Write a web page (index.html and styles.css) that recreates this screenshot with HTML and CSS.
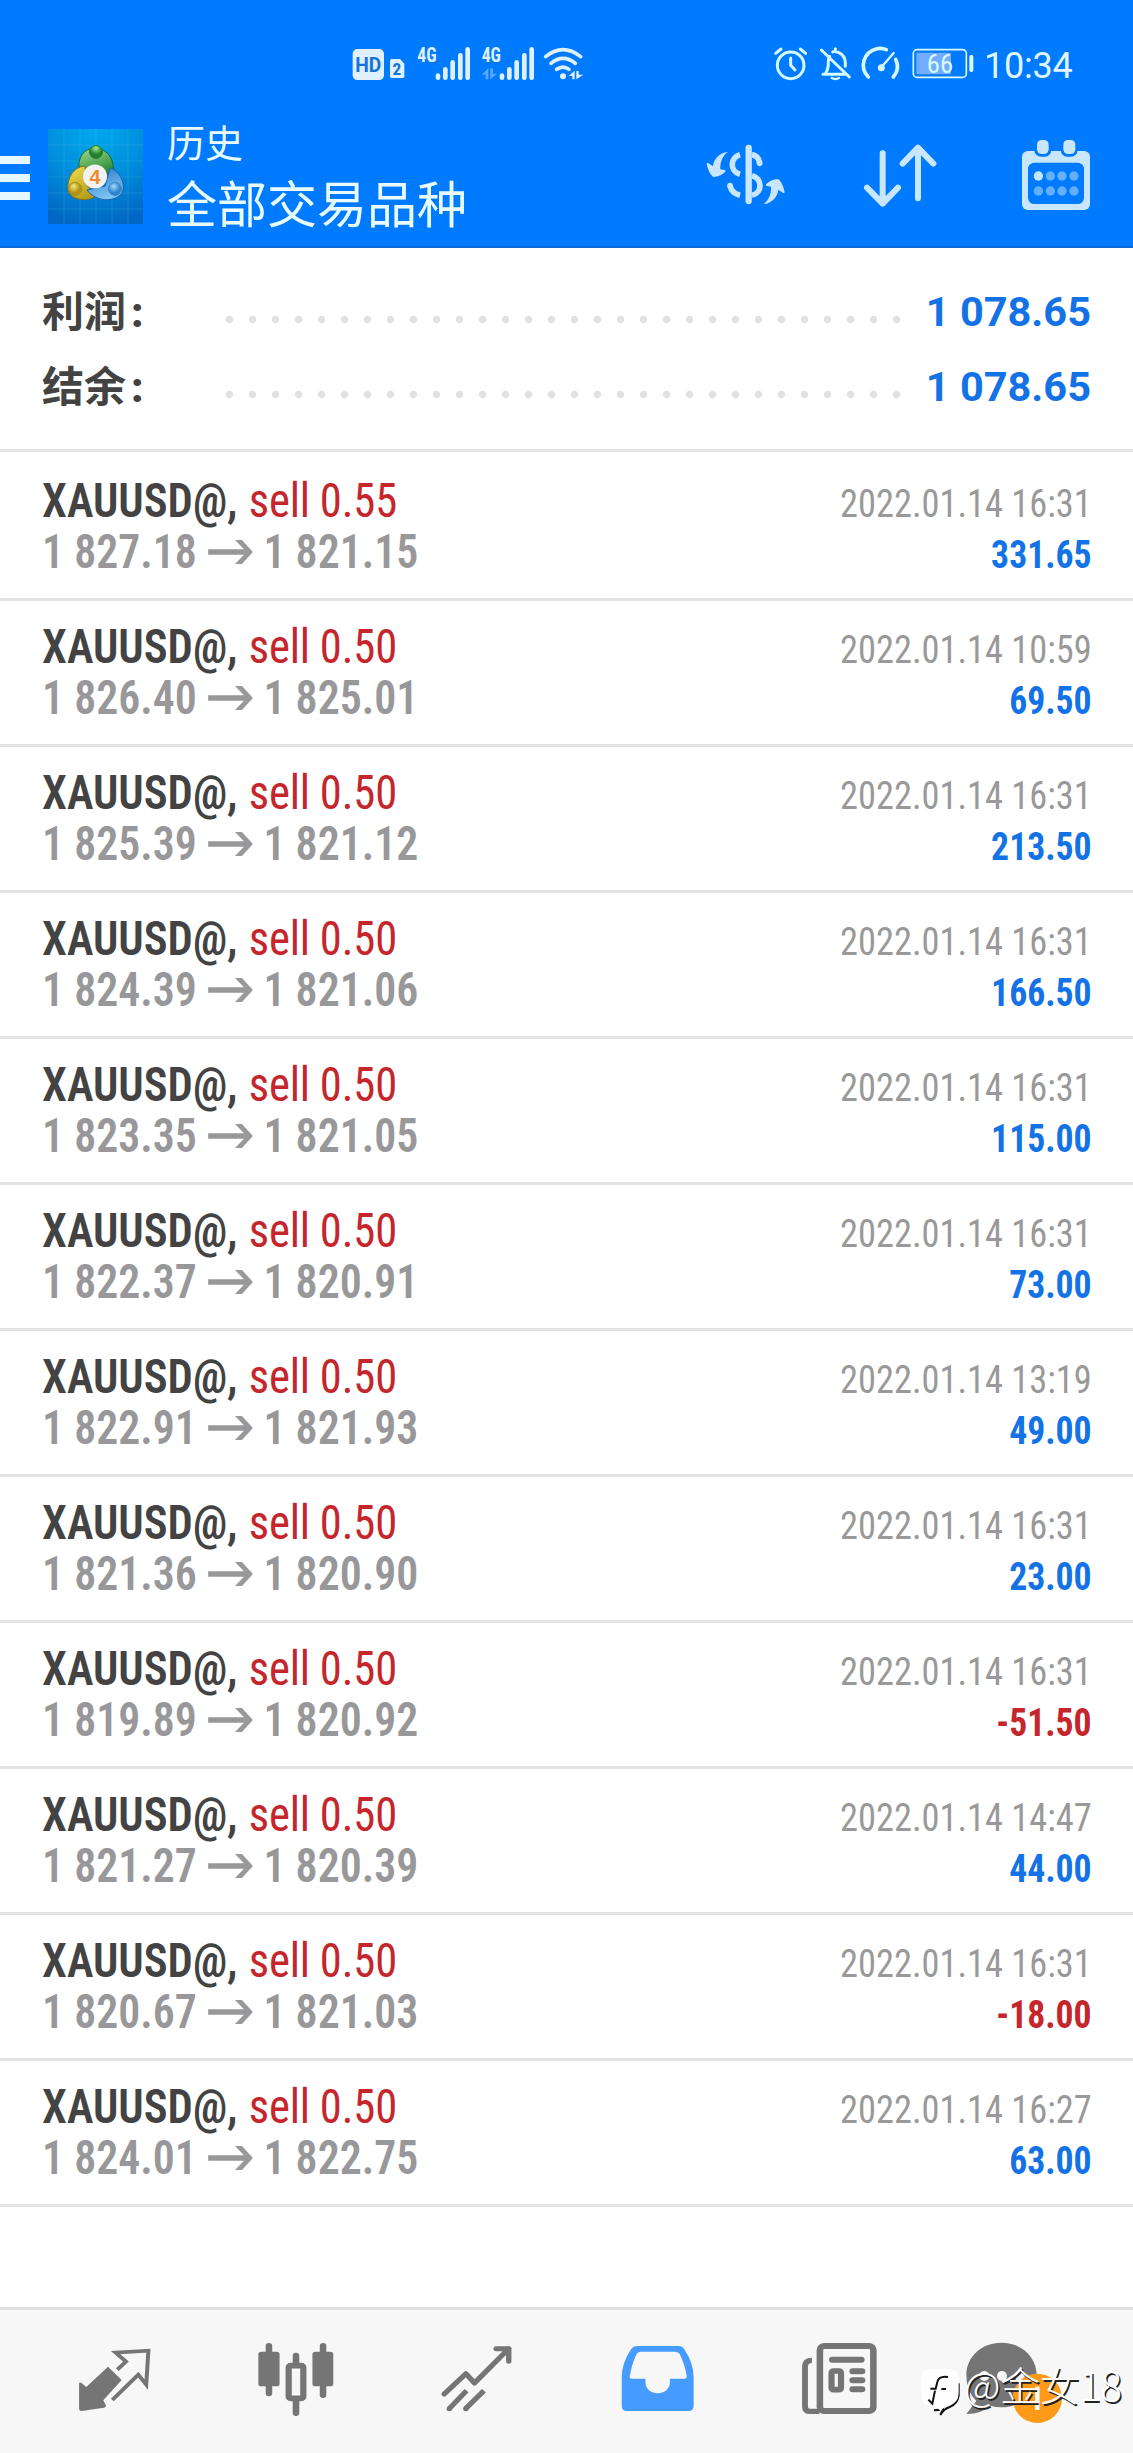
FILE: index.html
```html
<!DOCTYPE html>
<html lang="zh-CN">
<head>
<meta charset="utf-8">
<title>历史</title>
<link rel="stylesheet" href="styles.css">
</head>
<body>
<header class="header">
  <div class="status">
    <svg class="status-left" viewBox="36 45 696 110">
      <rect x="38" y="57" width="94" height="93" rx="14" fill="#dff1ff"/>
      <text x="85" y="125" class="hd" text-anchor="middle" textLength="78" lengthAdjust="spacingAndGlyphs">HD</text>
      <path d="M150 92q0-5 5-5h25l13 14v38q0 5-5 5h-33q-5 0-5-5z" fill="#dff1ff"/>
      <text x="171" y="136" class="sim" text-anchor="middle">2</text>
      <text x="232" y="95" class="net" textLength="58" lengthAdjust="spacingAndGlyphs">4G</text>
      <text x="425" y="95" class="net" textLength="58" lengthAdjust="spacingAndGlyphs">4G</text>
      <g stroke="#dff1ff" stroke-width="14" stroke-linecap="round">
        <path d="M294 137v6M316 118v25M338 97v46M361 76v67M383 58v85"/>
        <path d="M486 137v6M508 118v25M530 97v46M553 76v67M575 58v85"/>
      </g>
      <path d="M425 134l20-19v33h-8v-14zM451 148v-33h8v16h12z" fill="#58a9ff"/>
      <g fill="none" stroke="#dff1ff" stroke-width="11" stroke-linecap="round">
        <path d="M617 80Q669 38 722 80"/><path d="M633 100Q669 70 706 100"/><path d="M650 118Q669 104 687 118"/>
      </g>
      <circle cx="669" cy="139" r="9" fill="#dff1ff"/>
      <path d="M686 138l18-16v26h-7v-10zM709 148v-25h7v11h14z" fill="#dff1ff"/>
    </svg>
    <svg class="status-right" viewBox="36 45 606 110">
      <g fill="none" stroke="#d5fbff" stroke-width="9" stroke-linecap="round" stroke-linejoin="round">
        <circle cx="92" cy="106" r="40"/><path d="M92 84v22l13 14M47 70l16-13M121 57l16 13"/>
        <path d="M184 60l84 81M189 133h65M197 130q9-14 8-37 0-8 4-14M218 66q5-3 17 1 21 9 21 32v10M226 56v4"/>
        <path d="M215 144q11 6 22 0" stroke-width="7"/>
        <path d="M325 141q-21-20-13-50 9-28 39-35 15-3 28 3M407 88q14 28-7 53" stroke-width="11"/>
        <path d="M401 69l-37 43" stroke-width="7"/>
        <circle cx="364" cy="113" r="6"/>
        <rect x="460" y="59" width="159" height="83" rx="11" stroke-width="5"/>
      </g>
      <rect x="469" y="68" width="104" height="65" rx="4" fill="#72adff"/>
      <rect x="628" y="75" width="12" height="51" rx="5" fill="#d5fbff"/>
      <text x="540" y="128" class="charge" text-anchor="middle">66</text>
    </svg>
    <span class="clock">10:34</span>
  </div>
  <div class="toolbar">
    <div class="menu"><i></i><i></i><i></i></div>
    <svg class="logo" viewBox="0 0 95 95">
      <defs>
        <radialGradient id="sky" cx=".5" cy="0" r="1"><stop offset="0" stop-color="#00a8f0"/><stop offset=".5" stop-color="#0090dc"/><stop offset="1" stop-color="#0068c4"/></radialGradient>
        <linearGradient id="gr" x2=".4" y2="1"><stop stop-color="#a5dc90"/><stop offset="1" stop-color="#258a35"/></linearGradient>
        <linearGradient id="ye" x2=".4" y2="1"><stop stop-color="#f0dd50"/><stop offset="1" stop-color="#b8a018"/></linearGradient>
        <linearGradient id="bl" x2=".4" y2="1"><stop stop-color="#2878c0"/><stop offset="1" stop-color="#7cc4f4"/></linearGradient>
        <radialGradient id="gb" cx=".5" cy=".2"><stop stop-color="#a8e890"/><stop offset="1" stop-color="#228030"/></radialGradient>
        <radialGradient id="yb" cx=".4" cy=".3"><stop stop-color="#f4e480"/><stop offset="1" stop-color="#b09010"/></radialGradient>
        <radialGradient id="bb" cx=".4" cy=".3"><stop stop-color="#a0d8fc"/><stop offset="1" stop-color="#2f80cc"/></radialGradient>
      </defs>
      <rect width="95" height="95" fill="url(#sky)"/>
      <path d="M16 0v95M32 0v95M48 0v95M64 0v95M80 0v95M0 16h95M0 32h95M0 48h95M0 64h95M0 80h95" stroke="#58c0f0" stroke-width=".7" opacity=".35"/>
      <g stroke-width="1">
        <path d="M34 48C28 38 30 20 47 19 63 20 69 37 63 48L55 40H40z" fill="url(#gr)" stroke="#176c2a"/>
        <path d="M37 37C25 38 19 49 20 61 23 72 40 73 48 67L38 55z" fill="url(#ye)" stroke="#80701a"/>
        <path d="M62 39C72 42 78 55 74 64 66 74 48 73 39 61L57 57z" fill="url(#bl)" stroke="#1c5fa8"/>
        <circle cx="48" cy="23" r="6.5" fill="url(#gb)" stroke="#247a34"/>
        <circle cx="27" cy="60" r="6.5" fill="url(#yb)" stroke="#a09020"/>
        <circle cx="67" cy="60" r="6.5" fill="url(#bb)" stroke="#3c88cc"/>
      </g>
      <circle cx="47" cy="47.500" r="12" fill="#f4f2f0"/>
      <text x="47" y="54.500" class="four" text-anchor="middle">4</text>
    </svg>
    <div class="titles">
      <div class="title">历史</div>
      <div class="subtitle">全部交易品种</div>
    </div>
    <svg class="currency" viewBox="78 72 240 186">
      <path d="M206 84v159" stroke="#c9e6ff" stroke-width="19" stroke-linecap="round"/>
      <path d="M180 104C150 112 148 154 180 163M216 104Q235 107 239 129M216 167C248 175 248 219 216 226M180 226Q155 220 150 197" fill="none" stroke="#c9e6ff" stroke-width="17"/>
      <circle cx="239" cy="130" r="8.500" fill="#c9e6ff"/><circle cx="150" cy="197" r="8.500" fill="#c9e6ff"/>
      <path id="swoosh" d="M143 96C118 97 100 120 99 139L83 128Q78 130 81 136 87 160 97 169 101 172 106 170 122 168 136 155 138 151 134 150L121 148C120 125 128 108 143 96z" fill="#c9e6ff"/>
      <use href="#swoosh" transform="rotate(180 197 174)"/>
    </svg>
    <svg class="sort" viewBox="550 70 222 195">
      <path d="M609 101v150M562 204l47 48 46-48M715 236V84M669 132l46-48 46 48" fill="none" stroke="#c9e6ff" stroke-width="18" stroke-linecap="round" stroke-linejoin="round"/>
    </svg>
    <svg class="calendar" viewBox="1023 57 210 216">
      <rect x="1026" y="93" width="204" height="177" rx="17" fill="#c9e6ff"/>
      <rect x="1044" y="128" width="168" height="124" rx="19" fill="#007aff"/>
      <rect x="1063" y="52" width="51" height="58" rx="20" fill="#007aff"/><rect x="1142" y="52" width="51" height="58" rx="20" fill="#007aff"/>
      <rect x="1071" y="60" width="35" height="42" rx="14" fill="#c9e6ff"/><rect x="1150" y="60" width="36" height="42" rx="14" fill="#c9e6ff"/>
      <circle cx="1075" cy="168" r="14" fill="#c9e6ff"/>
      <g fill="#64afff"><circle cx="1111" cy="168" r="14"/><circle cx="1146" cy="168" r="14"/><circle cx="1182" cy="168" r="14"/><circle cx="1075" cy="213" r="14"/><circle cx="1111" cy="213" r="14"/><circle cx="1146" cy="213" r="14"/><circle cx="1182" cy="213" r="14"/></g>
    </svg>
  </div>
</header>

<section class="summary">
  <div class="sum-row"><span class="sum-label">利润<b>:</b></span><span class="dots"></span><span class="sum-value">1 078.65</span></div>
  <div class="sum-row"><span class="sum-label">结余<b>:</b></span><span class="dots"></span><span class="sum-value">1 078.65</span></div>
</section>

<main class="list" id="list"></main>

<nav class="nav">
  <div class="tab"><svg width="74" height="82" viewBox="215 156 205 246" preserveAspectRatio="none">
    <path d="M298 230l38 40-51 61 8 17q-1 4-6 5l-62 10q-7 0-7-6v-77q1-4 6-2l14 13z" fill="#757575"/>
    <path d="M324 239l24-24-29-27 91-6-6 102-22-30-72 76" fill="none" stroke="#757575" stroke-width="11"/>
  </svg></div>
  <div class="tab"><svg width="76" height="82" viewBox="712 156 208 246" preserveAspectRatio="none">
    <path d="M742 168v142M890 168v147M816 197v25M816 330v39" stroke="#757575" stroke-width="18" stroke-linecap="round"/>
    <rect x="713" y="185" width="58" height="104" rx="8" fill="#757575"/><rect x="861" y="185" width="57" height="104" rx="8" fill="#757575"/>
    <rect x="796" y="227" width="40" height="98" rx="5" fill="#f7f7f7" stroke="#757575" stroke-width="17"/>
  </svg></div>
  <div class="tab"><svg width="71" height="82" viewBox="1218 156 197 246" preserveAspectRatio="none">
    <path d="M1227 312l60-61 24 28 95-103M1371 176h35v38" fill="none" stroke="#757575" stroke-width="15" stroke-linecap="round" stroke-linejoin="round"/>
    <path d="M1289 302l-48 54M1337 302l-51 54" stroke="#757575" stroke-width="15"/><circle cx="1241" cy="356" r="7.500" fill="#757575"/><circle cx="1287" cy="356" r="7.500" fill="#757575"/>
  </svg></div>
  <div class="tab"><svg width="73" height="82" viewBox="150 156 200 246" preserveAspectRatio="none">
    <path d="M194 168h114q10 0 15 9 26 42 26 85v86q0 15-14 15H166q-14 0-14-15v-86q0-43 26-85 6-9 16-9z" fill="#459cfe"/>
    <path d="M204 185h93q10 0 14 8 14 31 19 65 1 8-7 8h-39v10c0 45-67 45-67 0v-10h-36q-9 0-7-8 5-34 18-65 4-8 12-8z" fill="#f7f7f7"/>
  </svg></div>
  <div class="tab"><svg width="76" height="82" viewBox="650 156 209 246" preserveAspectRatio="none">
    <path d="M680 211q-19 0-19 19v120q0 14 14 14h26" fill="none" stroke="#757575" stroke-width="16"/>
    <rect x="702" y="168" width="147" height="195" rx="12" fill="none" stroke="#757575" stroke-width="18"/>
    <path d="M736 209h80M792 244h26M792 271h26M792 298h26" stroke="#757575" stroke-width="18" stroke-linecap="round"/>
    <rect x="734" y="243" width="26" height="56" rx="5" fill="none" stroke="#757575" stroke-width="17"/>
  </svg></div>
  <div class="tab chat"><svg width="98" height="82" viewBox="153 36 294 246">
    <path d="M259 38c60 0 106 43 106 97s-46 97-106 97q-18 0-33-5-25 24-72 25l30-39q-30-28-30-78c0-54 45-97 105-97z" fill="#757575"/>
    <g fill="#f7f7f7"><circle cx="208" cy="138" r="15"/><circle cx="261" cy="138" r="15"/><circle cx="314" cy="138" r="15"/></g>
    <circle cx="367" cy="205" r="74" fill="#ff9a19"/><path d="M367 170v70" stroke="#fff" stroke-width="13"/>
  </svg></div>
  <div class="mark">
    <svg width="44" height="52" viewBox="0 0 132 156">
      <path d="M42 136q18-1 26-4l-7 18q10-18 28-24 23-8 27-34V55" fill="none" stroke="#111" stroke-width="6"/>
      <path d="M32 12h52q32 0 32 32v40q0 32-32 36-18 8-22 22-4-16-28-18Q4 120 4 86V44q0-32 28-32z" fill="#fff"/>
      <path d="M84 36q-28-4-32 15l-5 20H31M64 72h14M45 77l-8 39-12-12" fill="none" stroke="#111" stroke-width="6"/>
    </svg><span>@金女18</span>
  </div>
</nav>
<script src="history.js"></script>
</body>
</html>
```

FILE: history.js
```js
const deals = [
  ['0.55', '1 827.18', '1 821.15', '16:31', '331.65'],
  ['0.50', '1 826.40', '1 825.01', '10:59', '69.50'],
  ['0.50', '1 825.39', '1 821.12', '16:31', '213.50'],
  ['0.50', '1 824.39', '1 821.06', '16:31', '166.50'],
  ['0.50', '1 823.35', '1 821.05', '16:31', '115.00'],
  ['0.50', '1 822.37', '1 820.91', '16:31', '73.00'],
  ['0.50', '1 822.91', '1 821.93', '13:19', '49.00'],
  ['0.50', '1 821.36', '1 820.90', '16:31', '23.00'],
  ['0.50', '1 819.89', '1 820.92', '16:31', '-51.50'],
  ['0.50', '1 821.27', '1 820.39', '14:47', '44.00'],
  ['0.50', '1 820.67', '1 821.03', '16:31', '-18.00'],
  ['0.50', '1 824.01', '1 822.75', '16:27', '63.00']
];
const arrow = '<svg class="arrow" viewBox="0 0 45 24" preserveAspectRatio="none"><path d="M0 9.200H36L27 0H34L45 12L34 24H27L36 14.800H0Z"/></svg>';
document.getElementById('list').innerHTML = deals.map(([lot, open, close, time, profit]) => `
  <div class="deal">
    <div class="left">
      <div class="symbol">XAUUSD@, <span class="side">sell ${lot}</span></div>
      <div class="prices">${open}${arrow}${close}</div>
    </div>
    <div class="right">
      <div class="date">2022.01.14 ${time}</div>
      <div class="profit${profit[0] === '-' ? ' loss' : ''}">${profit}</div>
    </div>
  </div>`).join('');
```

FILE: styles.css
```css
* { box-sizing: border-box; }
body {
  margin: 0;
  height: 2453px;
  display: flex;
  flex-direction: column;
  background: #fff;
  font-family: Roboto, "Noto Sans CJK SC", sans-serif;
}
svg { display: block; flex: none; overflow: visible; }

.header { height: 248px; background: #007aff; border-bottom: 2px solid #0a69d6; }
.status { display: flex; height: 110px; padding: 45px 0 0 352px; }
.status-left { width: 232px; height: 36.7px; }
.status-right { width: 202px; height: 36.7px; margin-left: 188px; }
.clock { font-size: 36px; line-height: 42px; color: #dff6ff; padding-left: 10px; letter-spacing: -.2px; }
.hd { font: 700 60px Roboto, sans-serif; fill: #1673d8; }
.sim { font: 700 52px "Roboto Condensed", sans-serif; fill: #1673d8; }
.net { font: 700 60px "Roboto Condensed", sans-serif; fill: #dff1ff; }
.charge { font: 400 80px "Roboto Condensed", sans-serif; fill: #d5fbff; }

.toolbar { display: flex; height: 136px; }
.menu { width: 30px; display: flex; flex-direction: column; gap: 10px; padding-top: 46px; }
.menu i { height: 8px; background: #e6f8ff; }
.logo { width: 95px; height: 95px; margin: 19px 0 0 18px; }
.four { font: 700 20px "Liberation Sans", sans-serif; fill: #f08a30; }
.titles { width: 400px; margin-left: 24px; color: #e8fbff; font-family: "Noto Sans CJK SC", sans-serif; }
.title { font-size: 38px; line-height: 48px; padding-top: 7px; }
.subtitle { font-size: 50px; line-height: 60px; padding-top: 6px; }
.currency { width: 80px; height: 62px; margin: 34px 0 0 139px; }
.sort { width: 74px; height: 65px; margin: 33px 0 0 77px; }
.calendar { width: 70px; height: 72px; margin: 29px 0 0 84px; }

.summary { height: 204px; padding: 26px 42px 0 42px; border-bottom: 3px solid #e3e3e3; }
.sum-row { display: flex; height: 75px; line-height: 75px; }
.sum-label { width: 176px; font: 700 42px/69px "Noto Sans CJK SC", sans-serif; color: #434343; }
.sum-label b { font-family: Roboto, sans-serif; margin-left: 5px; }
.dots { width: 690px; background: radial-gradient(circle at 11.5px 45.5px, #e1e1e1 3.3px, transparent 4.2px) 0 0 / 23px 75px; }
.sum-value { margin-left: auto; font-size: 41.500px; font-weight: 700; color: #1373e6; white-space: nowrap; }

.list { flex: 1; padding-top: 3px; }
.deal { height: 146px; padding: 20px 41px 0 42px; display: flex; justify-content: space-between; border-bottom: 3px solid #e3e3e3; font-family: "Roboto Condensed", Roboto, sans-serif; line-height: 51px; white-space: nowrap; }
.symbol { font-size: 48px; font-weight: 600; color: #434343; transform: scaleX(.93); transform-origin: left; }
.side { font-weight: 430; color: #c5262c; margin-left: 1px; letter-spacing: -.2px; }
.prices { display: flex; align-items: center; font-size: 48px; font-weight: 600; color: #98989b; transform: scaleX(.913); transform-origin: left; }
.arrow { width: 49px; height: 24px; margin: 0 12px; fill: #98989b; }
.right { padding-top: 4px; text-align: right; font-size: 39px; }
.date { color: #999; transform: scaleX(.933); transform-origin: right; }
.profit { font-weight: 700; color: #1373e6; transform: scaleX(.915); transform-origin: right; }
.loss { color: #c5262c; }

.nav { height: 146px; position: relative; display: grid; grid-template-columns: repeat(6, 181px); padding: 32px 0 0 24px; background: #f7f7f7; border-top: 3px solid #e0e0e0; }
.tab { display: flex; justify-content: center; }
.chat { padding-right: 9px; }
.mark { position: absolute; left: 920px; top: 55px; display: flex; white-space: nowrap; }
.mark span { font: 300 40px/38px "Noto Sans CJK SC", sans-serif; color: #fff; text-shadow: 1.5px 1.5px 0 #222; letter-spacing: -.3px; }
```
